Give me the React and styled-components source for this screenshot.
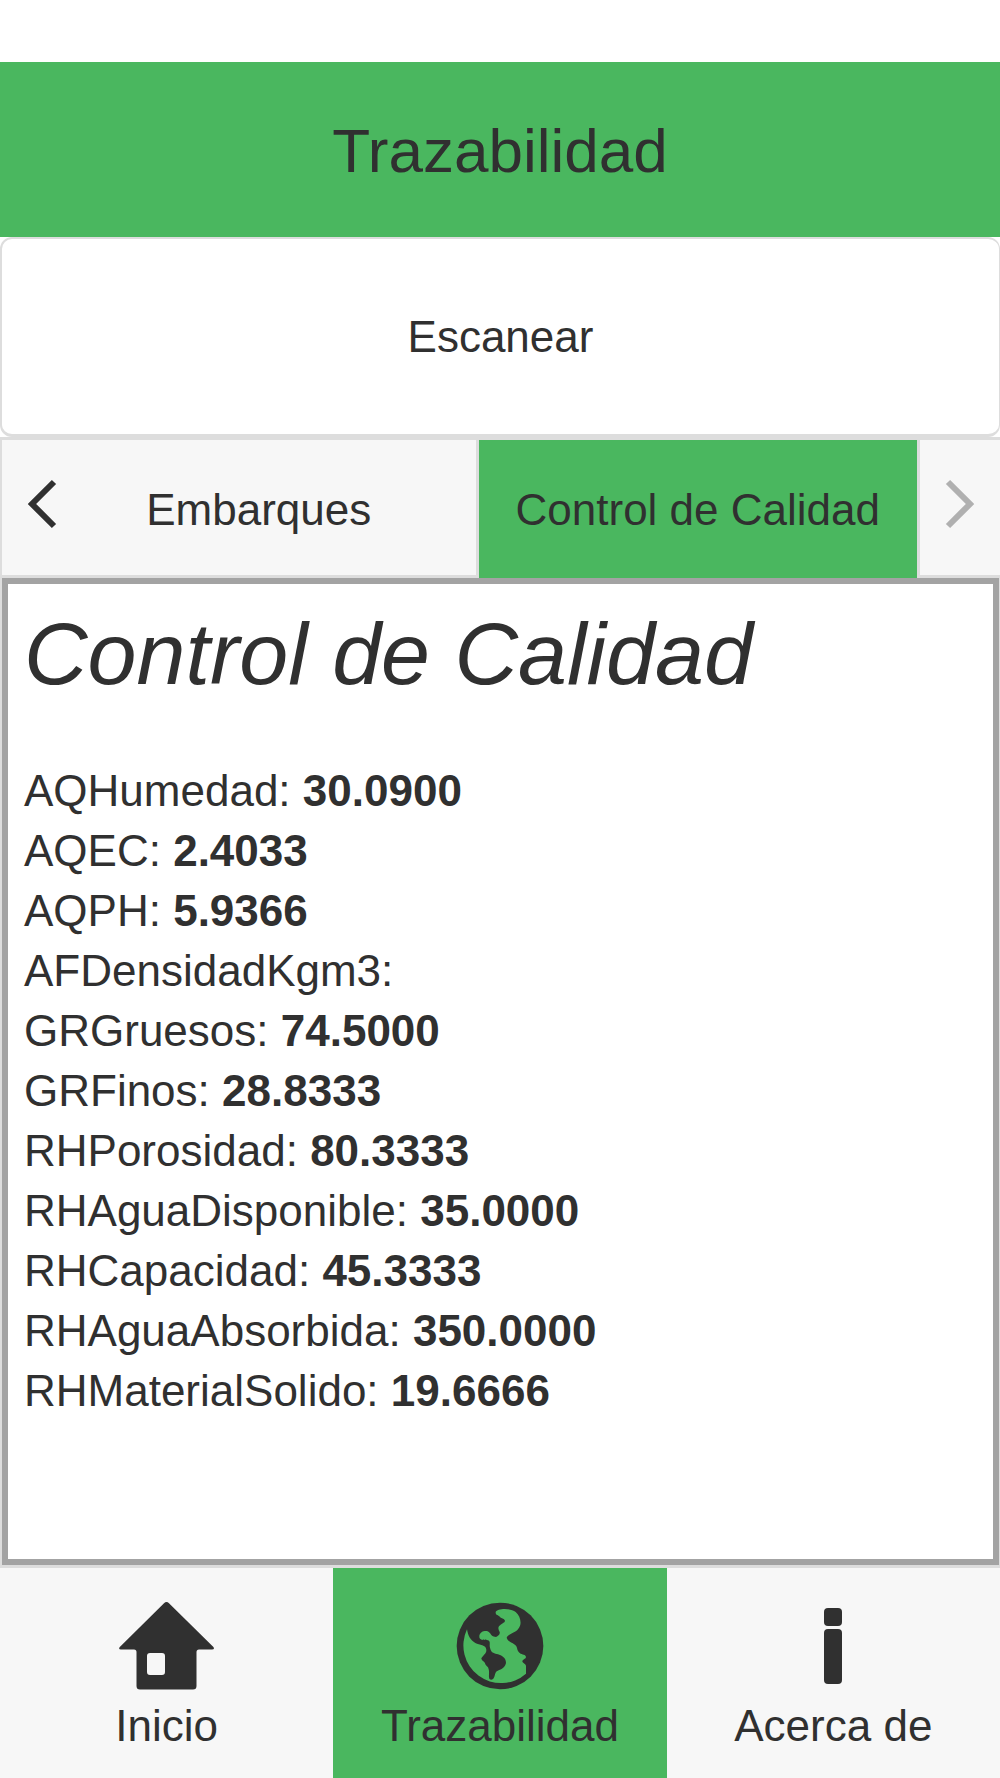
import React from "react"
import styled, { createGlobalStyle } from "styled-components"

const green = "#4ab75f"
const dark = "#303030"
const line = "#dddddd"

const resultados = [
  { label: "AQHumedad", value: "30.0900" },
  { label: "AQEC", value: "2.4033" },
  { label: "AQPH", value: "5.9366" },
  { label: "AFDensidadKgm3", value: "" },
  { label: "GRGruesos", value: "74.5000" },
  { label: "GRFinos", value: "28.8333" },
  { label: "RHPorosidad", value: "80.3333" },
  { label: "RHAguaDisponible", value: "35.0000" },
  { label: "RHCapacidad", value: "45.3333" },
  { label: "RHAguaAbsorbida", value: "350.0000" },
  { label: "RHMaterialSolido", value: "19.6666" },
]

const HomeIcon = () => (
  <svg width="96" height="88" viewBox="0 0 96 88" aria-hidden="true">
    <path
      fill="currentColor"
      fillRule="evenodd"
      d="M45 1.2Q47.5-1 50 1.2L94.4 45Q96 47.5 93 47.5H80Q77.5 47.5 77.5 50V84Q77.5 87.5 74 87.5H21Q17.5 87.5 17.5 84V50Q17.5 47.5 15 47.5H2Q-1 47.5.8 45ZM31 51Q28 51 28 54V70Q28 73 31 73H43Q46 73 46 70V54Q46 51 43 51Z"
    />
  </svg>
)

const GlobeIcon = () => (
  <svg width="88" height="88" viewBox="110 35 264 264" aria-hidden="true">
    <circle cx="242" cy="167" r="130" fill="currentColor" />
    <path
      fill={green}
      d="M229 65C234 54 272 52 289 65C304 78 309 102 297 115C286 130 268 128 262 142C266 157 284 156 291 168C295 176 293 181 301 188C309 194 319 192 320 200C319 207 309 207 309 213C310 220 319 219 320 227V250A113 113 0 0 1 143 117C146 136 153 150 168 158C181 164 200 163 201 178C202 190 192 193 186 204C187 214 197 212 198 222C201 228 207 229 208 237C211 247 207 257 210 265C213 269 220 269 223 264C227 257 226 249 232 243C241 238 256 235 260 218C260 201 246 196 236 192C226 188 216 190 212 172C209 163 215 154 206 150C197 148 186 152 181 144C177 134 185 123 196 122C208 121 212 128 216 134C220 140 226 139 230 140C236 138 243 132 241 125C236 117 235 109 243 104C248 98 256 98 257 91C253 83 244 85 240 78C238 74 228 75 229 65Z"
    />
  </svg>
)

const InfoIcon = () => (
  <svg width="88" height="88" viewBox="0 0 88 88" aria-hidden="true">
    <rect x="35" y="6" width="18" height="18" rx="4" fill="currentColor" />
    <rect x="35" y="27" width="18" height="55" rx="4" fill="currentColor" />
  </svg>
)

const Chevron = ({ points }) => (
  <svg width="30" height="50" viewBox="0 0 30 50" aria-hidden="true">
    <polyline points={points} fill="none" stroke="currentColor" strokeWidth="6" />
  </svg>
)

const App = () => {
  return (
    <>
      <GlobalStyle />
      <Page>
        <Header>
          <Title>Trazabilidad</Title>
        </Header>
        <ScanButton type="button">Escanear</ScanButton>
        <Tabs>
          <Arrow type="button" aria-label="Anterior">
            <Chevron points="27,3 5,25 27,47" />
          </Arrow>
          <PreviousTab type="button">Embarques</PreviousTab>
          <ActiveTab type="button">Control de Calidad</ActiveTab>
          <Arrow type="button" aria-label="Siguiente" disabled>
            <Chevron points="3,3 25,25 3,47" />
          </Arrow>
        </Tabs>
        <Content>
          <Panel>
            <PanelTitle>Control de Calidad</PanelTitle>
            <Results>
              {resultados.map(item => (
                <Result key={item.label}>
                  {item.label}: <strong>{item.value}</strong>
                </Result>
              ))}
            </Results>
          </Panel>
        </Content>
        <BottomBar>
          <BottomLink href="#inicio">
            <HomeIcon />
            <span>Inicio</span>
          </BottomLink>
          <BottomLink href="#trazabilidad" $active>
            <GlobeIcon />
            <span>Trazabilidad</span>
          </BottomLink>
          <BottomLink href="#acerca">
            <InfoIcon />
            <span>Acerca de</span>
          </BottomLink>
        </BottomBar>
      </Page>
    </>
  )
}

export default App

const GlobalStyle = createGlobalStyle`
  * {
    box-sizing: border-box;
  }
  body {
    margin: 0;
    background-color: #ffffff;
    color: ${dark};
    font-family: "Liberation Sans", Arial, sans-serif;
    font-size: 44px;
    line-height: 60px;
  }
  button {
    margin: 0;
    padding: 0;
    border: 0;
    color: inherit;
    font: inherit;
    cursor: pointer;
  }
`

const Page = styled.div`
  display: flex;
  flex-direction: column;
  min-height: 100vh;
  /* room for the phone status bar */
  padding-top: 62px;
`

const Header = styled.header`
  display: flex;
  align-items: center;
  justify-content: center;
  height: 175px;
  padding-top: 2px;
  background-color: ${green};
`

const Title = styled.h1`
  margin: 0;
  font-size: 62px;
  font-weight: normal;
  line-height: 72px;
`

const ScanButton = styled.button`
  && {
    height: 200px;
    border: 2px solid ${line};
    border-right-width: 1px;
    border-bottom-width: 3px;
    border-radius: 12px;
    background-color: #ffffff;
  }
`

const Tabs = styled.nav`
  display: flex;
  height: 141px;
  border-top: 3px solid ${line};
  border-left: 2px solid ${line};
  background-color: #f7f7f7;
`

const Arrow = styled.button`
  && {
    display: flex;
    align-items: center;
    justify-content: center;
    width: 80px;
    padding-bottom: 8px;
    border-bottom: 3px solid ${line};
    background-color: #f7f7f7;
  }

  &:disabled {
    color: #b0b0b0;
    cursor: default;
  }
`

const PreviousTab = styled.button`
  && {
    flex: 1;
    padding: 4px 40px 0 0;
    border-right: 3px solid ${line};
    border-bottom: 3px solid ${line};
    background-color: #f7f7f7;
  }
`

const ActiveTab = styled.button`
  && {
    padding: 2px 37px 0;
    border-right: 3px solid ${line};
    background-color: ${green};
    background-clip: padding-box;
  }
`

const Content = styled.main`
  display: flex;
  flex: 1;
  border: 3px solid ${line};
  border-top-width: 0;
  border-right-width: 1px;
  border-left-width: 2px;
`

const Panel = styled.section`
  flex: 1;
  padding: 20px 16px;
  border: 6px solid #a3a3a3;
`

const PanelTitle = styled.h2`
  margin: 0 0 57px;
  font-size: 88px;
  font-style: italic;
  font-weight: normal;
  line-height: 100px;
`

const Results = styled.ul`
  margin: 0;
  padding: 0;
  list-style: none;
`

const Result = styled.li`
  strong {
    font-weight: bold;
  }
`

const BottomBar = styled.nav`
  display: grid;
  grid-template-columns: repeat(3, 1fr);
  background-color: #f7f7f7;
`

const BottomLink = styled.a`
  display: flex;
  flex-direction: column;
  align-items: center;
  gap: 6px;
  padding: 34px 0 22px;
  background-color: ${props => (props.$active ? green : "transparent")};
  color: ${dark};
  text-decoration: none;
`
